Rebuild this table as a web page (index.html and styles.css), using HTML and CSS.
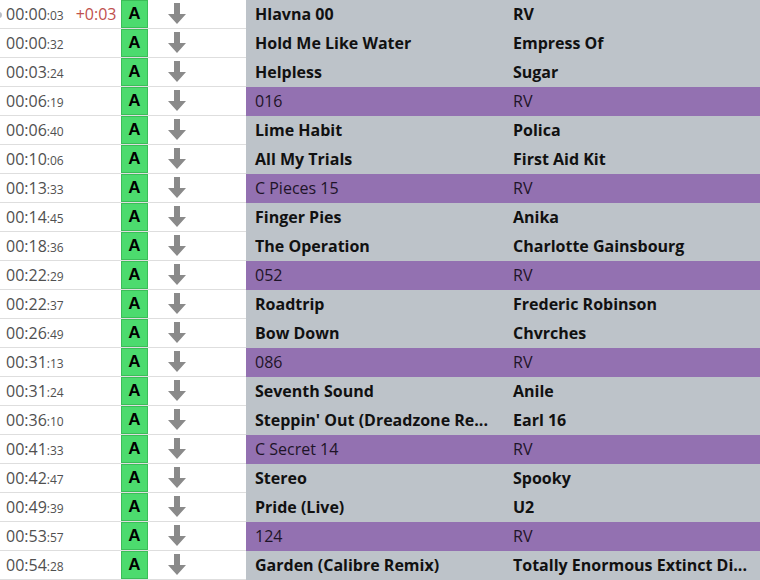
FILE: index.html
```html
<!DOCTYPE html>
<html>
<head>
<meta charset="utf-8">
<link rel="stylesheet" href="styles.css">
</head>
<body>
<div class="list">
  <div class="row"><div class="time"><span class="dot"></span><span class="hm">00:00</span><span class="s">:03</span><span class="off">+0:03</span></div><div class="badge">A</div><div class="arrow"><svg viewBox="0 0 18 21" width="18" height="21"><path d="M6 0h6v11h6l-9 10l-9-10h6z"/></svg></div><div class="title">Hlavna 00</div><div class="artist">RV</div></div>
  <div class="row"><div class="time"><span class="hm">00:00</span><span class="s">:32</span></div><div class="badge">A</div><div class="arrow"><svg viewBox="0 0 18 21" width="18" height="21"><path d="M6 0h6v11h6l-9 10l-9-10h6z"/></svg></div><div class="title">Hold Me Like Water</div><div class="artist">Empress Of</div></div>
  <div class="row"><div class="time"><span class="hm">00:03</span><span class="s">:24</span></div><div class="badge">A</div><div class="arrow"><svg viewBox="0 0 18 21" width="18" height="21"><path d="M6 0h6v11h6l-9 10l-9-10h6z"/></svg></div><div class="title">Helpless</div><div class="artist">Sugar</div></div>
  <div class="row jingle"><div class="time"><span class="hm">00:06</span><span class="s">:19</span></div><div class="badge">A</div><div class="arrow"><svg viewBox="0 0 18 21" width="18" height="21"><path d="M6 0h6v11h6l-9 10l-9-10h6z"/></svg></div><div class="title">016</div><div class="artist">RV</div></div>
  <div class="row"><div class="time"><span class="hm">00:06</span><span class="s">:40</span></div><div class="badge">A</div><div class="arrow"><svg viewBox="0 0 18 21" width="18" height="21"><path d="M6 0h6v11h6l-9 10l-9-10h6z"/></svg></div><div class="title">Lime Habit</div><div class="artist">Polica</div></div>
  <div class="row"><div class="time"><span class="hm">00:10</span><span class="s">:06</span></div><div class="badge">A</div><div class="arrow"><svg viewBox="0 0 18 21" width="18" height="21"><path d="M6 0h6v11h6l-9 10l-9-10h6z"/></svg></div><div class="title">All My Trials</div><div class="artist">First Aid Kit</div></div>
  <div class="row jingle"><div class="time"><span class="hm">00:13</span><span class="s">:33</span></div><div class="badge">A</div><div class="arrow"><svg viewBox="0 0 18 21" width="18" height="21"><path d="M6 0h6v11h6l-9 10l-9-10h6z"/></svg></div><div class="title">C Pieces 15</div><div class="artist">RV</div></div>
  <div class="row"><div class="time"><span class="hm">00:14</span><span class="s">:45</span></div><div class="badge">A</div><div class="arrow"><svg viewBox="0 0 18 21" width="18" height="21"><path d="M6 0h6v11h6l-9 10l-9-10h6z"/></svg></div><div class="title">Finger Pies</div><div class="artist">Anika</div></div>
  <div class="row"><div class="time"><span class="hm">00:18</span><span class="s">:36</span></div><div class="badge">A</div><div class="arrow"><svg viewBox="0 0 18 21" width="18" height="21"><path d="M6 0h6v11h6l-9 10l-9-10h6z"/></svg></div><div class="title">The Operation</div><div class="artist">Charlotte Gainsbourg</div></div>
  <div class="row jingle"><div class="time"><span class="hm">00:22</span><span class="s">:29</span></div><div class="badge">A</div><div class="arrow"><svg viewBox="0 0 18 21" width="18" height="21"><path d="M6 0h6v11h6l-9 10l-9-10h6z"/></svg></div><div class="title">052</div><div class="artist">RV</div></div>
  <div class="row"><div class="time"><span class="hm">00:22</span><span class="s">:37</span></div><div class="badge">A</div><div class="arrow"><svg viewBox="0 0 18 21" width="18" height="21"><path d="M6 0h6v11h6l-9 10l-9-10h6z"/></svg></div><div class="title">Roadtrip</div><div class="artist">Frederic Robinson</div></div>
  <div class="row"><div class="time"><span class="hm">00:26</span><span class="s">:49</span></div><div class="badge">A</div><div class="arrow"><svg viewBox="0 0 18 21" width="18" height="21"><path d="M6 0h6v11h6l-9 10l-9-10h6z"/></svg></div><div class="title">Bow Down</div><div class="artist">Chvrches</div></div>
  <div class="row jingle"><div class="time"><span class="hm">00:31</span><span class="s">:13</span></div><div class="badge">A</div><div class="arrow"><svg viewBox="0 0 18 21" width="18" height="21"><path d="M6 0h6v11h6l-9 10l-9-10h6z"/></svg></div><div class="title">086</div><div class="artist">RV</div></div>
  <div class="row"><div class="time"><span class="hm">00:31</span><span class="s">:24</span></div><div class="badge">A</div><div class="arrow"><svg viewBox="0 0 18 21" width="18" height="21"><path d="M6 0h6v11h6l-9 10l-9-10h6z"/></svg></div><div class="title">Seventh Sound</div><div class="artist">Anile</div></div>
  <div class="row"><div class="time"><span class="hm">00:36</span><span class="s">:10</span></div><div class="badge">A</div><div class="arrow"><svg viewBox="0 0 18 21" width="18" height="21"><path d="M6 0h6v11h6l-9 10l-9-10h6z"/></svg></div><div class="title">Steppin' Out (Dreadzone Re...</div><div class="artist">Earl 16</div></div>
  <div class="row jingle"><div class="time"><span class="hm">00:41</span><span class="s">:33</span></div><div class="badge">A</div><div class="arrow"><svg viewBox="0 0 18 21" width="18" height="21"><path d="M6 0h6v11h6l-9 10l-9-10h6z"/></svg></div><div class="title">C Secret 14</div><div class="artist">RV</div></div>
  <div class="row"><div class="time"><span class="hm">00:42</span><span class="s">:47</span></div><div class="badge">A</div><div class="arrow"><svg viewBox="0 0 18 21" width="18" height="21"><path d="M6 0h6v11h6l-9 10l-9-10h6z"/></svg></div><div class="title">Stereo</div><div class="artist">Spooky</div></div>
  <div class="row"><div class="time"><span class="hm">00:49</span><span class="s">:39</span></div><div class="badge">A</div><div class="arrow"><svg viewBox="0 0 18 21" width="18" height="21"><path d="M6 0h6v11h6l-9 10l-9-10h6z"/></svg></div><div class="title">Pride (Live)</div><div class="artist">U2</div></div>
  <div class="row jingle"><div class="time"><span class="hm">00:53</span><span class="s">:57</span></div><div class="badge">A</div><div class="arrow"><svg viewBox="0 0 18 21" width="18" height="21"><path d="M6 0h6v11h6l-9 10l-9-10h6z"/></svg></div><div class="title">124</div><div class="artist">RV</div></div>
  <div class="row"><div class="time"><span class="hm">00:54</span><span class="s">:28</span></div><div class="badge">A</div><div class="arrow"><svg viewBox="0 0 18 21" width="18" height="21"><path d="M6 0h6v11h6l-9 10l-9-10h6z"/></svg></div><div class="title">Garden (Calibre Remix)</div><div class="artist">Totally Enormous Extinct Di...</div></div>
</div>
</body>
</html>
```

FILE: styles.css
```css
html, body {
  margin: 0;
  padding: 0;
  background: #ffffff;
}
body {
  font-family: "Open Sans", "Noto Sans", sans-serif;
  overflow: hidden;
}
.list {
  display: flex;
  flex-direction: column;
  width: 760px;
}
.row {
  display: grid;
  grid-template-columns: 121px 27px 98px 259px 1fr;
  height: 28px;
  border-bottom: 1px solid #dedede;
}
.time {
  display: flex;
  align-items: baseline;
  padding-left: 6px;
  color: #505050;
  line-height: 28px;
  white-space: nowrap;
}
.dot {
  align-self: center;
  width: 6px;
  height: 6px;
  border-radius: 50%;
  background: #b8bcc4;
  margin-left: -10px;
  margin-right: 4px;
}
.hm {
  font-size: 16px;
}
.s {
  font-size: 12px;
}
.off {
  margin-left: 12px;
  font-size: 16px;
  color: #c0504d;
}
.badge {
  background: #4cdb6e;
  border: 1px solid #3bbd58;
  box-sizing: border-box;
  height: 28px;
  display: flex;
  align-items: center;
  justify-content: center;
  font-family: "Liberation Sans", Arial, sans-serif;
  font-weight: bold;
  font-size: 17px;
  color: #000;
}
.arrow {
  display: flex;
  padding-left: 20px;
  padding-top: 3px;
  box-sizing: border-box;
}
.arrow svg {
  fill: #8a8a8a;
}
.title, .artist {
  background: #bdc3c9;
  color: #111;
  font-weight: bold;
  font-size: 16px;
  line-height: 28px;
  padding-left: 9px;
  white-space: nowrap;
  overflow: hidden;
}
.artist {
  padding-left: 8px;
}
.jingle .title, .jingle .artist {
  background: #9371b1;
  font-weight: normal;
  color: #1e1428;
}
```
